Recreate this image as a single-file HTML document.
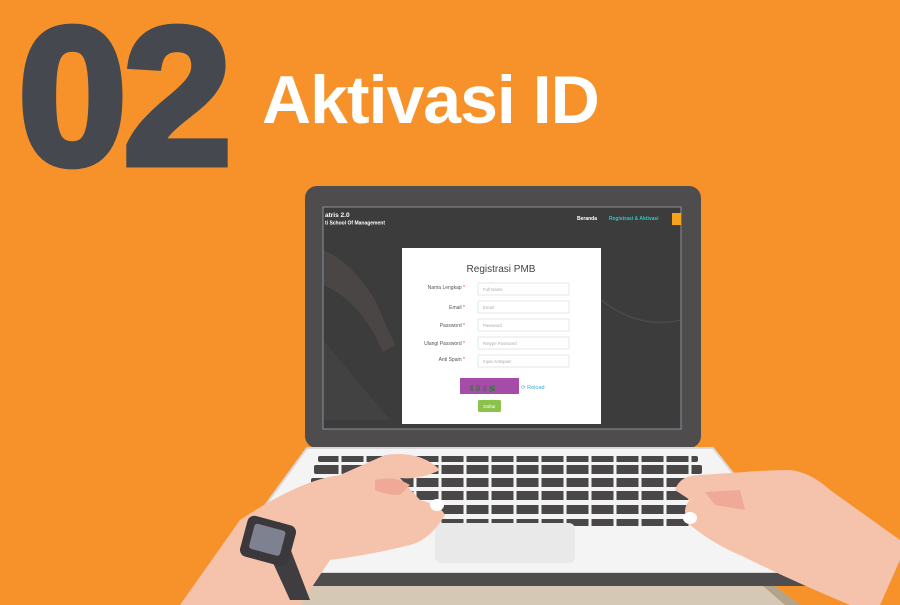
<!DOCTYPE html>
<html><head><meta charset="utf-8"><style>
html,body{margin:0;padding:0;background:#F7922A;}
svg{display:block}
text{font-family:"Liberation Sans",sans-serif}
</style></head><body>
<svg width="900" height="605" viewBox="0 0 900 605" xmlns="http://www.w3.org/2000/svg">
<rect width="900" height="605" fill="#F7922A"/>
<text x="18" y="164" font-size="196" font-weight="bold" fill="#45494F" stroke="#45494F" stroke-width="7" letter-spacing="-4">02</text>
<text x="262" y="123" font-size="68" font-weight="bold" fill="#fff" letter-spacing="-1">Aktivasi ID</text>

<!-- lid -->
<rect x="305" y="186" width="396" height="262" rx="12" fill="#4F4C4E"/>
<rect x="323" y="207" width="358" height="222" fill="#3d3c3c"/>
<path d="M323 250 Q350 260 375 300 L395 345 L383 352 Q360 300 323 285Z" fill="#4e4a48" opacity="0.7"/>
<path d="M323 340 L390 420 L323 420Z" fill="#454343" opacity="0.8"/>
<path d="M601 300 Q640 330 681 320" stroke="#4a4a4a" stroke-width="1.5" fill="none"/>
<rect x="323" y="207" width="358" height="222" fill="none" stroke="#8a8f9a" stroke-width="1"/>
<text x="325" y="217" font-size="6.5" font-weight="bold" fill="#fff">atris 2.0</text>
<text x="325" y="224.5" font-size="5" font-weight="bold" fill="#fff">ti School Of Management</text>
<text x="577" y="220" font-size="5" font-weight="bold" fill="#fff">Beranda</text>
<text x="609" y="220" font-size="5" font-weight="bold" fill="#2ec4c4">Registrasi &amp; Aktivasi</text>
<rect x="672" y="213" width="9" height="12" fill="#F7A21B"/>

<!-- form -->
<rect x="402" y="248" width="199" height="176" fill="#fff"/>
<text x="501" y="272" font-size="10" text-anchor="middle" fill="#444">Registrasi PMB</text>
<g font-size="5" fill="#555" text-anchor="end">
<text x="465" y="289">Nama Lengkap <tspan fill="#e33">*</tspan></text>
<text x="465" y="309">Email <tspan fill="#e33">*</tspan></text>
<text x="465" y="327">Password <tspan fill="#e33">*</tspan></text>
<text x="465" y="345">Ulangi Password <tspan fill="#e33">*</tspan></text>
<text x="465" y="361">Anti Spam <tspan fill="#e33">*</tspan></text>
</g>
<g fill="#fff" stroke="#ddd" stroke-width="0.7">
<rect x="478" y="283" width="91" height="12" rx="1"/>
<rect x="478" y="301" width="91" height="12" rx="1"/>
<rect x="478" y="319" width="91" height="12" rx="1"/>
<rect x="478" y="337" width="91" height="12" rx="1"/>
<rect x="478" y="355" width="91" height="12" rx="1"/>
</g>
<g font-size="4.3" fill="#aaa">
<text x="483" y="291">Full Name</text>
<text x="483" y="309">Email</text>
<text x="483" y="327">Password</text>
<text x="483" y="345">Retype Password</text>
<text x="483" y="363">Input Antispam</text>
</g>
<rect x="460" y="378" width="59" height="16" fill="#A54CA8"/>
<text x="469" y="391" font-size="8" font-weight="bold" fill="#3a7a3a">4  δ  ∂ ≶</text>
<text x="521" y="389" font-size="5.5" fill="#3aa8d8">⟳ Reload</text>
<rect x="478" y="400" width="23" height="12" rx="1.5" fill="#8BC34A"/>
<text x="489.5" y="408" font-size="4.5" fill="#fff" text-anchor="middle">Daftar</text>

<!-- deck -->
<path d="M307 448 L713 448 L812 573 L216 573 Z" fill="#F4F4F4" stroke="#d8d8da" stroke-width="2"/>
<rect x="216" y="573" width="596" height="13" rx="3" fill="#4F4C4E"/>
<path d="M250 586 L775 586 L800 605 L232 605Z" fill="#D5C9B6"/>
<path d="M232 605 L250 586 L262 586 L248 605Z" fill="#B3A489"/>
<path d="M775 586 L800 605 L785 605 L763 586Z" fill="#B3A489"/>
<!-- keys -->
<g fill="#4A4749">
<rect x="318" y="456" width="380" height="6" rx="2"/>
<rect x="314" y="465" width="388" height="9" rx="2"/>
<rect x="311" y="478" width="394" height="9" rx="2"/>
<rect x="307" y="491" width="402" height="9" rx="2"/>
<rect x="303" y="505" width="410" height="9" rx="2"/>
<rect x="430" y="519" width="285" height="7" rx="2"/>
</g>
<g stroke="#F4F4F4" stroke-width="3">
<path d="M340 455v75M365 455v75M390 455v75M415 455v75M440 455v75M465 455v75M490 455v75M515 455v75M540 455v75M565 455v75M590 455v75M615 455v75M640 455v75M665 455v75M690 455v75"/>
</g>
<rect x="435" y="523" width="140" height="40" rx="6" fill="#E9E9E9"/>

<!-- left hand -->
<path d="M180 605 L240 520 Q300 480 340 475 L385 455 Q420 450 440 470 Q420 480 400 478 L420 500 Q440 505 445 515 Q430 540 410 545 Q370 555 330 560 L300 605Z" fill="#F5C3AC"/>
<path d="M375 480 Q395 475 410 485 L400 495 Q385 495 375 490Z" fill="#EFA996"/>
<ellipse cx="437" cy="505" rx="7" ry="6" fill="#fff"/>
<path d="M258 530 L290 600 L310 600 L280 522Z" fill="#3F3D3F"/>
<rect x="243" y="520" width="50" height="42" rx="7" fill="#3A383A" transform="rotate(15 268 541)"/>
<rect x="251" y="527" width="32" height="26" rx="3" fill="#7E8190" transform="rotate(15 268 541)"/>
<!-- right hand -->
<path d="M900 560 L880 605 L850 605 Q790 580 740 555 Q715 545 690 525 Q680 510 690 500 L675 490 Q680 475 700 475 L745 472 Q770 470 790 470 Q810 472 830 490 L900 540Z" fill="#F5C3AC"/>
<path d="M705 492 L740 490 L745 510 L715 505Z" fill="#EFA996"/>
<ellipse cx="690" cy="518" rx="7" ry="6" fill="#fff"/>
</svg>
</body></html>
